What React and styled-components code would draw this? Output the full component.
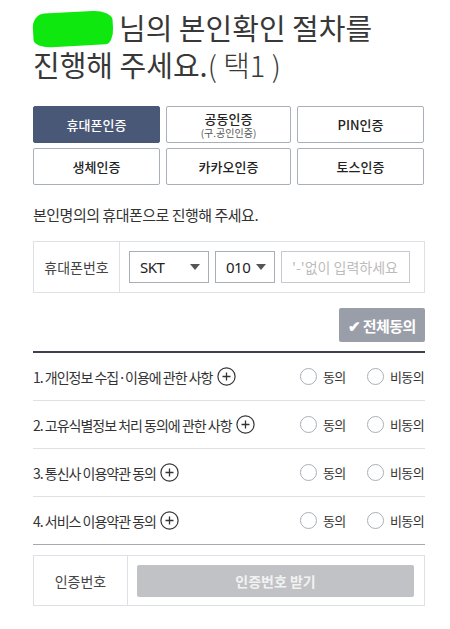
import styled, { createGlobalStyle } from 'styled-components';

const GlobalStyle = createGlobalStyle`
    body {
        margin: 0;
        background: #fff;
        font-family: 'Noto Sans CJK KR', 'Noto Sans', sans-serif;
        color: #333;
    }
    * {
        box-sizing: border-box;
    }
`;

const methods = [
    { label: '휴대폰인증', active: true },
    { label: '공동인증', sub: '(구.공인인증)' },
    { label: 'PIN인증' },
    { label: '생체인증' },
    { label: '카카오인증' },
    { label: '토스인증' },
];

const terms = [
    '1. 개인정보 수집·이용에 관한 사항',
    '2. 고유식별정보 처리 동의에 관한 사항',
    '3. 통신사 이용약관 동의',
    '4. 서비스 이용약관 동의',
];

function Caret() {
    return (
        <svg width="10" height="6" viewBox="0 0 10 6">
            <path d="M0 0h10L5 6z" fill="#555" />
        </svg>
    );
}

function PlusCircle() {
    return (
        <svg width="19" height="19" viewBox="0 0 19 19">
            <circle cx="9.5" cy="9.5" r="8.6" fill="none" stroke="#333" strokeWidth="1.2" />
            <path d="M9.5 5.5v8M5.5 9.5h8" stroke="#333" strokeWidth="1.3" />
        </svg>
    );
}

export default function App() {
    return (
        <Page>
            <GlobalStyle />
            <Title>
                <Redact />님의 본인확인 절차를
                <br />
                진행해 주세요.<Light>( 택1 )</Light>
            </Title>

            <Tabs>
                {methods.map((m) => (
                    <Tab key={m.label} $active={m.active}>
                        <span>{m.label}</span>
                        {m.sub && <Sub>{m.sub}</Sub>}
                    </Tab>
                ))}
            </Tabs>

            <Desc>본인명의의 휴대폰으로 진행해 주세요.</Desc>

            <FormBox>
                <Label $w={86}>휴대폰번호</Label>
                <Cell>
                    <Select $w={80}>
                        SKT <Caret />
                    </Select>
                    <Select $w={60}>
                        010 <Caret />
                    </Select>
                    <Input placeholder="'-'없이 입력하세요" />
                </Cell>
            </FormBox>

            <AllRow>
                <AllButton>
                    <span>✔</span>전체동의
                </AllButton>
            </AllRow>

            <TermList>
                {terms.map((t, i) => (
                    <TermRow key={t} $last={i === terms.length - 1}>
                        <TermText>
                            {t}
                            <PlusCircle />
                        </TermText>
                        <Choice>
                            <Radio />
                            동의
                        </Choice>
                        <Choice $wide>
                            <Radio />
                            비동의
                        </Choice>
                    </TermRow>
                ))}
            </TermList>

            <FormBox $auth>
                <Label $w={94}>인증번호</Label>
                <Cell>
                    <SendButton>인증번호 받기</SendButton>
                </Cell>
            </FormBox>
        </Page>
    );
}

const Page = styled.div`
    width: 450px;
    padding: 9px 25px 24px 33px;
`;

const Title = styled.h1`
    margin: 0;
    font-size: 29px;
    line-height: 36px;
    font-weight: 400;
    color: #383838;
    white-space: nowrap;
`;

const Redact = styled.span`
    display: inline-block;
    width: 80px;
    height: 34px;
    margin-right: 6px;
    vertical-align: -6px;
    background: #0ee80e;
    border-radius: 12px 20px 8px 18px / 14px 10px 16px 8px;
    transform: rotate(-3deg);
`;

const Light = styled.span`
    font-weight: 300;
`;

const Tabs = styled.div`
    display: grid;
    grid-template-columns: 127px 125px 127px;
    grid-auto-rows: 37px;
    column-gap: 6px;
    row-gap: 5px;
    margin-top: 24px;
`;

const Tab = styled.div`
    display: flex;
    flex-direction: column;
    align-items: center;
    justify-content: center;
    border: 1px solid ${(p) => (p.$active ? '#4a5878' : '#a9b0b8')};
    border-radius: 2px;
    background: ${(p) => (p.$active ? '#4a5878' : '#fff')};
    color: ${(p) => (p.$active ? '#fff' : '#222')};
    font-size: 13px;
    font-weight: 500;
    line-height: 15px;
`;

const Sub = styled.span`
    margin-top: 1px;
    font-size: 10px;
    line-height: 12px;
    font-weight: 400;
    color: #555;
`;

const Desc = styled.p`
    margin: 19px 0 0;
    font-size: 15px;
    line-height: 22px;
    letter-spacing: -0.5px;
    color: #333;
`;

const FormBox = styled.div`
    display: flex;
    height: ${(p) => (p.$auth ? 51 : 52)}px;
    margin-top: ${(p) => (p.$auth ? 10 : 15)}px;
    border: 1px solid #dde0e5;
`;

const Label = styled.div`
    width: ${(p) => p.$w}px;
    flex-shrink: 0;
    display: flex;
    align-items: center;
    justify-content: center;
    border-right: 1px solid #dde0e5;
    font-size: 14px;
    color: #444;
`;

const Cell = styled.div`
    flex: 1;
    display: flex;
    align-items: center;
    gap: 6px;
    padding: 0 9px;
`;

const Select = styled.div`
    width: ${(p) => p.$w}px;
    flex-shrink: 0;
    height: 32px;
    display: flex;
    align-items: center;
    justify-content: space-between;
    padding: 0 8px 0 10px;
    border: 1px solid #a9aeb4;
    font-family: 'Noto Sans', 'Liberation Sans', sans-serif;
    font-size: 15px;
    letter-spacing: -0.5px;
    color: #222;
`;

const Input = styled.input`
    width: 129px;
    flex-shrink: 0;
    height: 32px;
    padding: 0 10px;
    border: 1px solid #c6cace;
    border-radius: 0;
    font-family: 'Noto Sans CJK KR', sans-serif;
    font-size: 14px;
    outline: none;

    &::placeholder {
        color: #bcbcbc;
    }
`;

const AllRow = styled.div`
    display: flex;
    justify-content: flex-end;
    margin-top: 15px;
`;

const AllButton = styled.div`
    width: 86px;
    height: 34px;
    display: flex;
    align-items: center;
    justify-content: center;
    gap: 2px;
    background: #9a9ea9;
    border-radius: 2px;
    color: #fff;
    font-size: 15px;
    font-weight: 700;
    letter-spacing: -0.5px;
`;

const TermList = styled.div`
    margin-top: 9px;
    border-top: 2px solid #3d4150;
`;

const TermRow = styled.div`
    display: flex;
    align-items: center;
    height: 48px;
    border-bottom: 1px solid ${(p) => (p.$last ? '#a5a8ad' : '#dde0e5')};
`;

const TermText = styled.div`
    flex: 1;
    display: flex;
    align-items: center;
    gap: 4px;
    font-size: 14px;
    letter-spacing: -1px;
    white-space: nowrap;
    color: #333;
`;

const Choice = styled.label`
    display: flex;
    align-items: center;
    gap: 6px;
    flex-shrink: 0;
    width: ${(p) => (p.$wide ? 58 : 67)}px;
    font-size: 13px;
    letter-spacing: -0.6px;
    white-space: nowrap;
    color: #333;
`;

const Radio = styled.span`
    width: 17px;
    height: 17px;
    flex-shrink: 0;
    border: 1px solid #a9b0b8;
    border-radius: 50%;
    background: #fff;
`;

const SendButton = styled.div`
    flex: 1;
    height: 32px;
    display: flex;
    align-items: center;
    justify-content: center;
    margin-right: 1px;
    background: #c0c2c6;
    border-radius: 2px;
    color: #f2f2f2;
    font-size: 14px;
    font-weight: 700;
`;
